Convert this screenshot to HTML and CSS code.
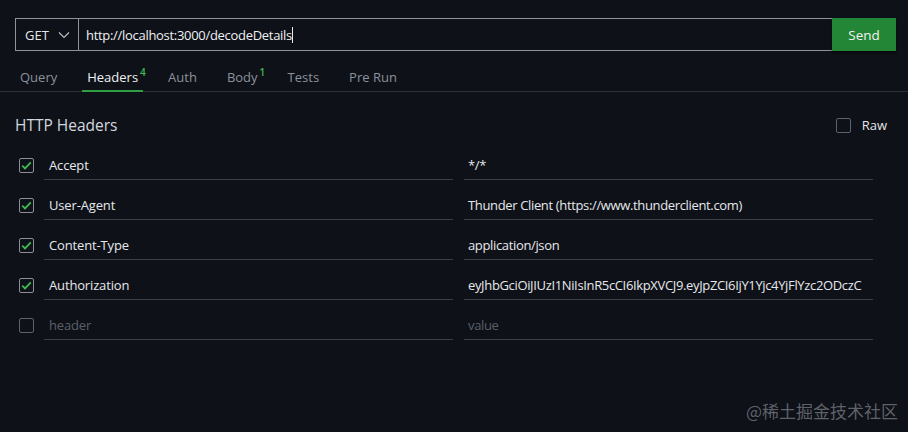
FILE: index.html
```html
<!DOCTYPE html>
<html>

<head>
  <title>Thunder Client - Headers</title>
  <link rel="stylesheet" href="styles.css">
</head>

<body>
  <!-- Request bar: method, url and send -->
  <div class="request-bar">
    <div class="method">
      <span>GET</span>
      <svg class="chevron" width="12" height="8" viewBox="0 0 12 8"><path d="M1 1.5 L6 6.5 L11 1.5" fill="none" stroke="#b8bcc4" stroke-width="1.2"/></svg>
    </div>
    <div class="url"><span>http://localhost:3000/decodeDetails</span><span class="caret"></span></div>
    <button class="send">Send</button>
  </div>

  <!-- Request tabs -->
  <div class="tabs">
    <div class="tab"><span class="label">Query</span></div>
    <div class="tab active"><span class="label">Headers<sup>4</sup></span></div>
    <div class="tab"><span class="label">Auth</span></div>
    <div class="tab"><span class="label">Body<sup>1</sup></span></div>
    <div class="tab"><span class="label">Tests</span></div>
    <div class="tab"><span class="label">Pre Run</span></div>
  </div>

  <!-- Headers table -->
  <div class="headers">
    <div class="headers-title">
      <h3>HTTP Headers</h3>
      <label class="raw"><span class="box"></span>Raw</label>
    </div>

    <div class="row">
      <span class="box checked"></span>
      <div class="field key">Accept</div>
      <div class="field value">*/*</div>
    </div>
    <div class="row">
      <span class="box checked"></span>
      <div class="field key">User-Agent</div>
      <div class="field value">Thunder Client (https://www.thunderclient.com)</div>
    </div>
    <div class="row">
      <span class="box checked"></span>
      <div class="field key">Content-Type</div>
      <div class="field value">application/json</div>
    </div>
    <div class="row">
      <span class="box checked"></span>
      <div class="field key">Authorization</div>
      <div class="field value">eyJhbGciOiJIUzI1NiIsInR5cCI6IkpXVCJ9.eyJpZCI6IjY1Yjc4YjFlYzc2ODczC</div>
    </div>
    <div class="row">
      <span class="box"></span>
      <div class="field key empty">header</div>
      <div class="field value empty">value</div>
    </div>
  </div>

  <div class="watermark">@稀土掘金技术社区</div>
</body>

</html>
```

FILE: styles.css
```css
body {
  margin: 0;
  background-color: #0e1118;
  color: #e1e4e8;
  font-family: "Open Sans", "Noto Sans", sans-serif;
  font-size: 13px;
  height: 432px;
  overflow: hidden;
  position: relative;
}

.request-bar {
  display: flex;
  height: 33px;
  margin: 18px 12px 0 15px;
}

.method {
  width: 64px;
  border: 1px solid #8e939b;
  display: flex;
  align-items: center;
  justify-content: space-between;
  padding: 0 8px 0 9px;
  box-sizing: border-box;
  color: #e6e8eb;
}

.url {
  flex: 1;
  border-top: 1px solid #8e939b;
  border-bottom: 1px solid #8e939b;
  display: flex;
  align-items: center;
  padding-left: 7px;
  color: #eef0f2;
  letter-spacing: -0.3px;
}

.caret {
  display: inline-block;
  width: 1px;
  height: 16px;
  background-color: #e6e8eb;
}

.send {
  width: 64px;
  border: none;
  background-color: #238636;
  color: #f0f3f0;
  font-family: inherit;
  font-size: 13.5px;
  cursor: pointer;
  box-shadow: 0 2px 2px rgba(0, 0, 0, 0.5);
}

.tabs {
  display: flex;
  gap: 20px;
  padding: 0 0 0 15px;
  height: 40px;
  border-bottom: 1px solid #2c3038;
}

.tab {
  padding: 12px 5px 0;
  display: flex;
  align-items: center;
  color: #8b929b;
  border-bottom: 2px solid transparent;
  margin-bottom: -1px;
}

.label {
  position: relative;
}

.tab sup {
  position: absolute;
  left: 100%;
  top: -3px;
  margin-left: 2px;
  color: #3fb950;
  font-size: 10px;
  font-weight: 600;
}

.tab.active {
  color: #f0f2f4;
  border-bottom-color: #2ea043;
}

.headers {
  padding: 19px 35px 0 15px;
}

.headers-title {
  display: flex;
  align-items: center;
  justify-content: space-between;
  height: 28px;
  margin-bottom: 6px;
}

h3 {
  margin: 0;
  font-weight: normal;
  font-size: 15.5px;
  color: #d4d8de;
}

.raw {
  display: flex;
  align-items: center;
  gap: 11px;
  margin-right: -14px;
  color: #e1e4e8;
}

.box {
  width: 15px;
  height: 15px;
  border: 1px solid #5c626b;
  border-radius: 2px;
  box-sizing: border-box;
  display: inline-block;
  flex-shrink: 0;
}

.box.checked {
  border-color: #8a9099;
  background: url("data:image/svg+xml,%3Csvg xmlns='http://www.w3.org/2000/svg' width='15' height='15' viewBox='0 0 15 15'%3E%3Cpath d='M3.2 7.6 L6 10.4 L11.8 4.4' fill='none' stroke='%233fb950' stroke-width='1.8'/%3E%3C/svg%3E") center no-repeat;
}

.row {
  display: flex;
  align-items: center;
  height: 40px;
  padding-left: 4px;
}

.row .box {
  margin-right: 10px;
}

.field {
  height: 28px;
  line-height: 28px;
  margin-top: 1px;
  border-bottom: 1px solid #3a3f47;
  white-space: nowrap;
  overflow: hidden;
  color: #e6e8eb;
}

.key {
  width: 404px;
  padding-left: 5px;
  letter-spacing: -0.15px;
}

.value {
  width: 405px;
  padding-left: 4px;
  margin-left: 11px;
  letter-spacing: -0.35px;
}

.field.empty {
  color: #5b6068;
}

.watermark {
  position: absolute;
  right: 10px;
  bottom: 9px;
  font-family: "Noto Sans CJK SC", sans-serif;
  font-size: 17px;
  color: rgba(150, 155, 162, 0.6);
}
```
